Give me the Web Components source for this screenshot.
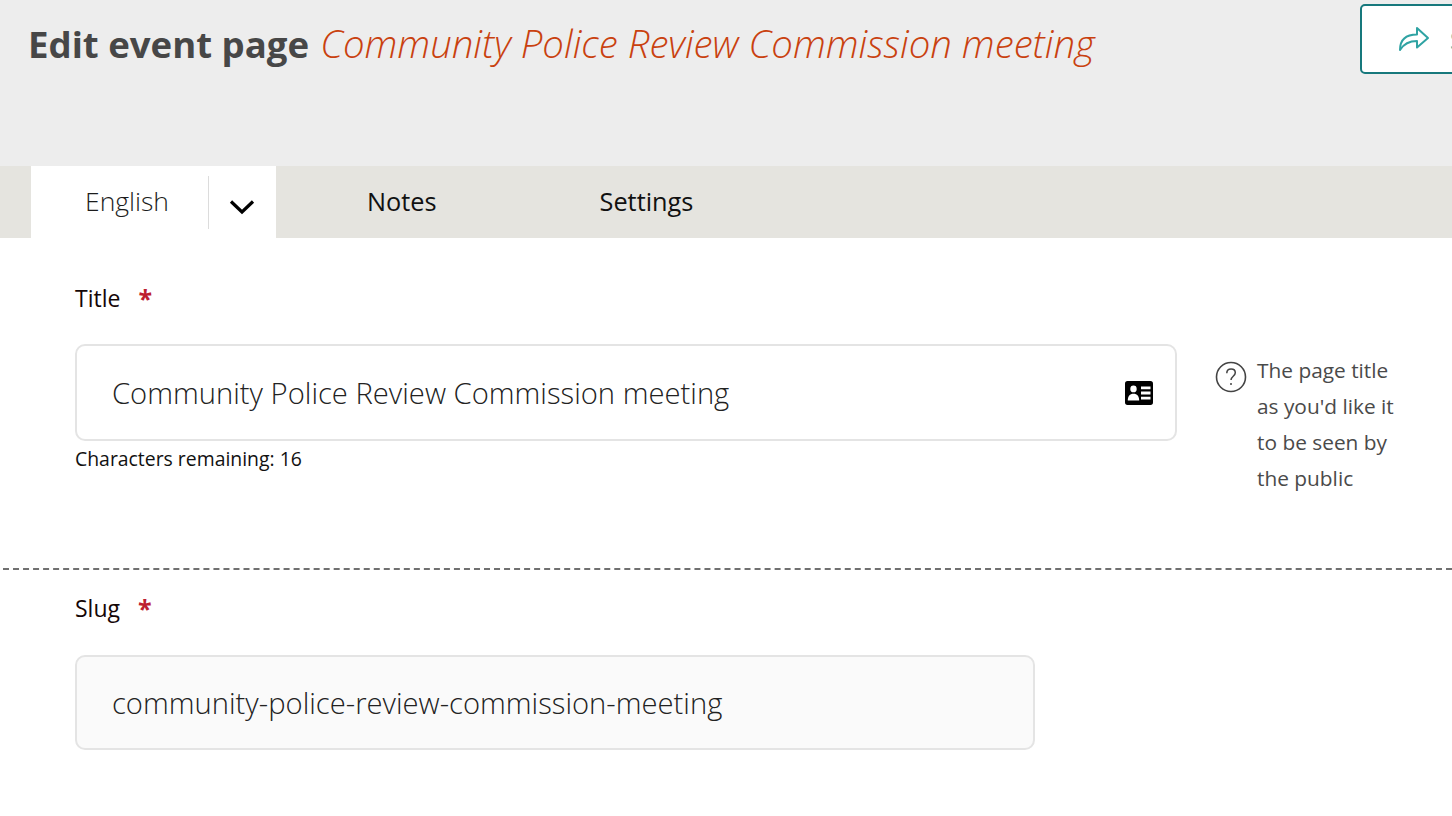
<!DOCTYPE html>
<html lang="en"><head><meta charset="utf-8"><title>Edit event page</title>
<style>
html,body{margin:0;padding:0;background:#fff;height:816px;overflow:hidden;font-family:"Open Sans",sans-serif}
</style></head><body>
<edit-page></edit-page>
<template id="t-page">
<style>
:host{display:block;width:1452px;height:816px;overflow:hidden}
</style>
<page-header></page-header>
<page-tabs></page-tabs>
<form-field label="Title" style="--label-top:46px;--gap:32px;--height:97px;--note-gap:4px;--width:1102px">
  <span slot="value">Community Police Review Commission meeting</span>
  <svg slot="icon" width="30" height="26" viewBox="0 0 30 24" preserveAspectRatio="none"><path fill-rule="evenodd" d="M3.500 1h23A2.500 2.500 0 0 1 29 3.500v17a2.500 2.500 0 0 1-2.500 2.500h-23A2.500 2.500 0 0 1 1 20.500v-17A2.500 2.500 0 0 1 3.500 1zM9.500 5a3.200 3.200 0 1 0 0 6.400 3.200 3.200 0 0 0 0-6.400zM3.800 19h11.400c0-3.800-2-6.300-5.700-6.300S3.800 15.200 3.800 19zM17 6v2.600h9.500V6zM17 10.700v2.600h9.500v-2.600zM17 15.400V18h9.500v-2.600z" fill="#000"/></svg>
  <span slot="note">Characters remaining: 16</span>
  <help-tip slot="help">The page title<br>as you'd like it<br>to be seen by<br>the public</help-tip>
</form-field>
<dashed-rule></dashed-rule>
<form-field label="Slug" style="--label-top:24px;--gap:33px;--height:95px;--width:960px;--fill:#fafafa">
  <span slot="value">community-police-review-commission-meeting</span>
</form-field>
</template>

<template id="t-header">
<style>
:host{display:flex;align-items:flex-start;height:166px;background:#ededed;box-sizing:border-box;padding-left:28px;overflow:hidden}
h1{margin:0;flex:0 0 1332px;display:flex;align-items:baseline;gap:11px;padding-top:19px;font-weight:700;font-size:36.600px;line-height:49px;color:#474747;white-space:nowrap}
em{font-weight:300;font-size:38.400px;color:#c9410f;font-style:italic}
.btn{flex:0 0 auto;box-sizing:border-box;width:200px;height:70px;margin-top:4px;background:#fff;border:2px solid #17787c;border-radius:5px;display:flex;align-items:center;padding-left:36px;gap:20px;color:#2ea5a5;font-size:24px}
</style>
<h1>Edit event page <em>Community Police Review Commission meeting</em></h1>
<div class="btn">
<svg width="32" height="26" viewBox="0 0 32 26" fill="none" stroke="#2fa3a3" stroke-width="2" stroke-linejoin="round" stroke-linecap="round"><path d="M2 24C2 14 8 8.500 19 8.500V2l11 10-11 9.500v-6.500C11 15 6 17.500 2 24z"/></svg>
<span>Save</span>
</div>
</template>

<template id="t-tabs">
<style>
:host{display:flex;height:72px;background:#e5e4df;padding-left:31px;color:#111;font-size:25.300px;font-weight:400;line-height:71px;box-sizing:border-box}
.lang{display:flex;align-items:center;width:245px;height:72px;background:#fff;flex:none}
.name{width:177px;box-sizing:border-box;padding-left:54px;padding-bottom:2px;font-weight:300;font-size:26.500px;color:#1c1c1c;white-space:nowrap}
.sep{width:1px;height:53px;background:#dcdcdc}
.chev{flex:1;display:flex;justify-content:center;padding:10px 2px 0 0}
.tab{flex:none}
.a{margin-left:91px}.b{margin-left:163px}
</style>
<div class="lang"><span class="name">English</span><span class="sep"></span><span class="chev"><svg width="26" height="16" viewBox="0 0 26 16" fill="none" stroke="#000" stroke-width="3.200"><path d="M2 2.500 13 13 24 2.500"/></svg></span></div>
<div class="tab a">Notes</div><div class="tab b">Settings</div>
</template>

<template id="t-field">
<style>
:host{display:block;padding-left:75px;padding-top:var(--label-top)}
.lab{font-size:23px;line-height:28px;color:#140606;height:28px;display:flex;gap:18px}
.star{color:#bd2030;font-weight:700;font-size:25px;line-height:28px}
.row{display:flex;gap:40px;margin-top:var(--gap)}
.col{flex:none;width:var(--width)}
.box{box-sizing:border-box;height:var(--height);border:2px solid #e4e4e4;border-radius:10px;background:var(--fill,#fff);display:flex;align-items:center;justify-content:space-between;padding:0 21px 0 35px;font-size:29.200px;font-weight:300;color:#222;white-space:nowrap}
.note{font-size:19.400px;line-height:27px;color:#111;margin-top:var(--note-gap,5px)}
</style>
<div class="lab"><span class="t"></span><span class="star">*</span></div>
<div class="row"><div class="col"><div class="box"><slot name="value"></slot><slot name="icon"></slot></div><div class="note"><slot name="note"></slot></div></div><slot name="help"></slot></div>
</template>

<template id="t-help">
<style>
:host{display:flex;gap:10px;padding-top:8px;margin-left:-2px;font-size:20.850px;line-height:36px;color:#4a4a4a;font-weight:400;align-items:flex-start}
svg{flex:none;margin-top:9px}
</style>
<svg width="32" height="32" viewBox="0 0 32 32"><circle cx="16" cy="16" r="14.500" fill="none" stroke="#444" stroke-width="1.600"/><path d="M11.800 12.300c0-2.600 1.900-4.200 4.300-4.200s4.200 1.500 4.200 3.700c0 3.400-4.300 3.500-4.300 7.200" fill="none" stroke="#444" stroke-width="1.500"/><circle cx="16" cy="23" r="1" fill="#444"/></svg>
<div><slot></slot></div>
</template>

<template id="t-rule">
<style>:host{display:block;height:0;border-top:2px dashed #707070;margin:72px 0 0 3px;width:1449px}</style>
</template>

<script>
const mount=(host,id)=>{const r=host.attachShadow({mode:"open"});r.appendChild(document.getElementById(id).content.cloneNode(true));return r;};
const def=(n,id,after)=>customElements.define(n,class extends HTMLElement{connectedCallback(){if(this.shadowRoot)return;const r=mount(this,id);after&&after(this,r);}});
def("page-header","t-header");
def("page-tabs","t-tabs");
def("help-tip","t-help");
def("dashed-rule","t-rule");
def("form-field","t-field",(h,r)=>{r.querySelector(".t").textContent=h.getAttribute("label");});
def("edit-page","t-page");
</script>
</body></html>
